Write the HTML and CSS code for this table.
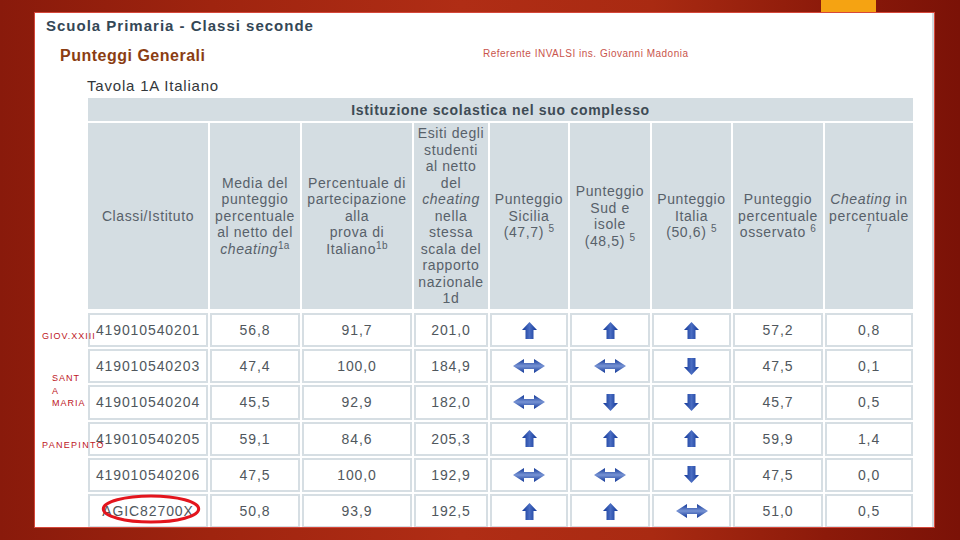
FILE: index.html
```html
<!DOCTYPE html>
<html lang="it">
<head>
<meta charset="utf-8">
<title>Tavola 1A Italiano</title>
<link rel="stylesheet" href="styles.css">
</head>
<body>
<div class="slide">
  <div class="topbar"><div class="tab"></div></div>
  <div class="panel">
    <h1 class="title">Scuola Primaria - Classi seconde</h1>
    <div class="subhead">
      <h2 class="section">Punteggi Generali</h2>
      <p class="referente">Referente INVALSI ins. Giovanni Madonia</p>
    </div>
    <h3 class="tavola">Tavola 1A Italiano</h3>

    <div class="grid">
      <div class="cap">Istituzione scolastica nel suo complesso</div>

      <div class="hd"><span>Classi/Istituto</span></div>
      <div class="hd"><span>Media del<br>punteggio<br>percentuale<br>al netto del<br><i>cheating</i><sup>1a</sup></span></div>
      <div class="hd"><span>Percentuale di<br>partecipazione<br>alla<br>prova di<br>Italiano<sup>1b</sup></span></div>
      <div class="hd"><span>Esiti degli<br>studenti<br>al netto<br>del<br><i>cheating</i><br>nella<br>stessa<br>scala del<br>rapporto<br>nazionale<br>1d</span></div>
      <div class="hd"><span>Punteggio<br>Sicilia<br>(47,7) <sup>5</sup></span></div>
      <div class="hd"><span>Punteggio<br>Sud e<br>isole<br>(48,5) <sup>5</sup></span></div>
      <div class="hd"><span>Punteggio<br>Italia<br>(50,6) <sup>5</sup></span></div>
      <div class="hd"><span>Punteggio<br>percentuale<br>osservato <sup>6</sup></span></div>
      <div class="hd"><span><i>Cheating</i> in<br>percentuale<br><sup>7</sup></span></div>

      <div class="cell">419010540201</div>
      <div class="cell">56,8</div>
      <div class="cell">91,7</div>
      <div class="cell">201,0</div>
      <div class="cell"><svg class="av" viewBox="0 0 15 17"><polygon class="fv" points="7.5,0 15,8 11.5,8 11.5,17 3.5,17 3.5,8 0,8"/></svg></div>
      <div class="cell"><svg class="av" viewBox="0 0 15 17"><polygon class="fv" points="7.5,0 15,8 11.5,8 11.5,17 3.5,17 3.5,8 0,8"/></svg></div>
      <div class="cell"><svg class="av" viewBox="0 0 15 17"><polygon class="fv" points="7.5,0 15,8 11.5,8 11.5,17 3.5,17 3.5,8 0,8"/></svg></div>
      <div class="cell">57,2</div>
      <div class="cell">0,8</div>

      <div class="cell">419010540203</div>
      <div class="cell">47,4</div>
      <div class="cell">100,0</div>
      <div class="cell">184,9</div>
      <div class="cell"><svg class="ah" viewBox="0 0 32 14"><polygon class="fh" points="0,7 11,0 11,4 21,4 21,0 32,7 21,14 21,10 11,10 11,14"/></svg></div>
      <div class="cell"><svg class="ah" viewBox="0 0 32 14"><polygon class="fh" points="0,7 11,0 11,4 21,4 21,0 32,7 21,14 21,10 11,10 11,14"/></svg></div>
      <div class="cell"><svg class="av" viewBox="0 0 15 17"><polygon class="fv" points="3.5,0 11.5,0 11.5,9 15,9 7.5,17 0,9 3.5,9"/></svg></div>
      <div class="cell">47,5</div>
      <div class="cell">0,1</div>

      <div class="cell">419010540204</div>
      <div class="cell">45,5</div>
      <div class="cell">92,9</div>
      <div class="cell">182,0</div>
      <div class="cell"><svg class="ah" viewBox="0 0 32 14"><polygon class="fh" points="0,7 11,0 11,4 21,4 21,0 32,7 21,14 21,10 11,10 11,14"/></svg></div>
      <div class="cell"><svg class="av" viewBox="0 0 15 17"><polygon class="fv" points="3.5,0 11.5,0 11.5,9 15,9 7.5,17 0,9 3.5,9"/></svg></div>
      <div class="cell"><svg class="av" viewBox="0 0 15 17"><polygon class="fv" points="3.5,0 11.5,0 11.5,9 15,9 7.5,17 0,9 3.5,9"/></svg></div>
      <div class="cell">45,7</div>
      <div class="cell">0,5</div>

      <div class="cell">419010540205</div>
      <div class="cell">59,1</div>
      <div class="cell">84,6</div>
      <div class="cell">205,3</div>
      <div class="cell"><svg class="av" viewBox="0 0 15 17"><polygon class="fv" points="7.5,0 15,8 11.5,8 11.5,17 3.5,17 3.5,8 0,8"/></svg></div>
      <div class="cell"><svg class="av" viewBox="0 0 15 17"><polygon class="fv" points="7.5,0 15,8 11.5,8 11.5,17 3.5,17 3.5,8 0,8"/></svg></div>
      <div class="cell"><svg class="av" viewBox="0 0 15 17"><polygon class="fv" points="7.5,0 15,8 11.5,8 11.5,17 3.5,17 3.5,8 0,8"/></svg></div>
      <div class="cell">59,9</div>
      <div class="cell">1,4</div>

      <div class="cell">419010540206</div>
      <div class="cell">47,5</div>
      <div class="cell">100,0</div>
      <div class="cell">192,9</div>
      <div class="cell"><svg class="ah" viewBox="0 0 32 14"><polygon class="fh" points="0,7 11,0 11,4 21,4 21,0 32,7 21,14 21,10 11,10 11,14"/></svg></div>
      <div class="cell"><svg class="ah" viewBox="0 0 32 14"><polygon class="fh" points="0,7 11,0 11,4 21,4 21,0 32,7 21,14 21,10 11,10 11,14"/></svg></div>
      <div class="cell"><svg class="av" viewBox="0 0 15 17"><polygon class="fv" points="3.5,0 11.5,0 11.5,9 15,9 7.5,17 0,9 3.5,9"/></svg></div>
      <div class="cell">47,5</div>
      <div class="cell">0,0</div>

      <div class="cell ringed">AGIC82700X<svg class="ring" viewBox="0 0 102 32"><ellipse cx="51" cy="16" rx="47.7" ry="13"/></svg></div>
      <div class="cell">50,8</div>
      <div class="cell">93,9</div>
      <div class="cell">192,5</div>
      <div class="cell"><svg class="av" viewBox="0 0 15 17"><polygon class="fv" points="7.5,0 15,8 11.5,8 11.5,17 3.5,17 3.5,8 0,8"/></svg></div>
      <div class="cell"><svg class="av" viewBox="0 0 15 17"><polygon class="fv" points="7.5,0 15,8 11.5,8 11.5,17 3.5,17 3.5,8 0,8"/></svg></div>
      <div class="cell"><svg class="ah" viewBox="0 0 32 14"><polygon class="fh" points="0,7 11,0 11,4 21,4 21,0 32,7 21,14 21,10 11,10 11,14"/></svg></div>
      <div class="cell">51,0</div>
      <div class="cell">0,5</div>
    </div>

    <div class="tag tag-giov">GIOV.XXIII</div>
    <div class="tag tag-sant">SANT<br>A<br>MARIA</div>
    <div class="tag tag-pane">PANEPINTO</div>
  </div>

  <svg class="defs" width="0" height="0" aria-hidden="true">
    <defs>
      <linearGradient id="gv" x1="0" y1="0" x2="1" y2="0">
        <stop offset="0" stop-color="#0f3596"/>
        <stop offset="0.5" stop-color="#4a6dc2"/>
        <stop offset="1" stop-color="#0f3596"/>
      </linearGradient>
      <linearGradient id="gh" x1="0" y1="0" x2="0" y2="1">
        <stop offset="0" stop-color="#0f3596"/>
        <stop offset="0.5" stop-color="#7793d4"/>
        <stop offset="1" stop-color="#0f3596"/>
      </linearGradient>
    </defs>
  </svg>
</div>
</body>
</html>
```

FILE: styles.css
```css
* { box-sizing: border-box; }

html, body {
  margin: 0;
  padding: 0;
}

body {
  width: 960px;
  height: 540px;
  overflow: hidden;
  font-family: "Liberation Sans", Arial, sans-serif;
}

.slide {
  width: 960px;
  height: 540px;
  overflow: hidden;
  display: flex;
  flex-direction: column;
  background: linear-gradient(90deg, #891a0b 0%, #9f240f 22%, #b02d15 48%, #a92a12 68%, #8c1a0a 86%, #7b1207 100%);
}

.topbar {
  height: 12px;
  flex: none;
}

.tab {
  margin-left: 821px;
  width: 55px;
  height: 12px;
  background: #f5a312;
}

.panel {
  position: relative;
  flex: none;
  margin-left: 34px;
  width: 901px;
  height: 516px;
  background: #fff;
  border: 1px solid #d5473a;
  box-shadow: inset -2px 0 0 #d3dbe0;
  overflow: hidden;
  padding: 4px 0 0 11px;
}

.title {
  margin: 0;
  font-size: 15px;
  line-height: 18px;
  font-weight: 700;
  letter-spacing: 1px;
  color: #344756;
}

.subhead {
  display: grid;
  grid-template-columns: 423px auto;
  align-items: start;
  margin: 11px 0 0 14px;
}

.section {
  margin: 0;
  font-size: 16px;
  line-height: 20px;
  font-weight: 700;
  letter-spacing: 0.5px;
  color: #8a3d12;
}

.referente {
  margin: 2px 0 0;
  font-size: 10px;
  line-height: 12px;
  letter-spacing: 0.5px;
  color: #c9544c;
}

.tavola {
  margin: 11px 0 0 41px;
  font-size: 15px;
  line-height: 18px;
  font-weight: 400;
  letter-spacing: 0.8px;
  color: #33373b;
}

.grid {
  margin: 3px 0 0 42px;
  display: grid;
  grid-template-columns: 120px 90px 110px 74px 78px 80px 79px 90px 88px;
  grid-template-rows: 23px 188px repeat(6, 34.2px);
  gap: 2px;
}

.cap {
  grid-column: 1 / -1;
  background: #d4dde2;
  display: flex;
  align-items: center;
  justify-content: center;
  font-size: 14px;
  font-weight: 700;
  letter-spacing: 0.7px;
  color: #3e4b55;
}

.hd {
  height: 186px;
  align-self: start;
  background: #d4dde2;
  display: flex;
  align-items: center;
  justify-content: center;
  text-align: center;
  font-size: 14px;
  line-height: 16.5px;
  letter-spacing: 0.6px;
  color: #58616a;
}

.hd span {
  display: block;
  white-space: nowrap;
}

.hd sup {
  font-size: 10px;
  line-height: 0;
  vertical-align: 5px;
  letter-spacing: 0.3px;
}

.cell {
  position: relative;
  background: #fff;
  border: 2px solid #d6dee3;
  display: flex;
  align-items: center;
  justify-content: center;
  font-size: 14px;
  letter-spacing: 0.9px;
  color: #50575d;
}

.av {
  width: 15px;
  height: 17px;
  display: block;
}

.ah {
  width: 32px;
  height: 14px;
  display: block;
}

.fv { fill: url(#gv); }
.fh { fill: url(#gh); }

.ring {
  position: absolute;
  left: 10px;
  top: -2.5px;
  width: 102px;
  height: 32px;
  overflow: visible;
}

.ring ellipse {
  fill: none;
  stroke: #e3151d;
  stroke-width: 3;
}

.tag {
  position: absolute;
  font-size: 9px;
  line-height: 11px;
  letter-spacing: 1px;
  color: #bd151c;
  white-space: nowrap;
}

.tag-giov { left: 7px; top: 318px; }
.tag-sant { left: 17px; top: 359px; line-height: 12.5px; }
.tag-pane { left: 7px; top: 427px; letter-spacing: 1.3px; }

.defs {
  display: block;
  width: 0;
  height: 0;
}
```
